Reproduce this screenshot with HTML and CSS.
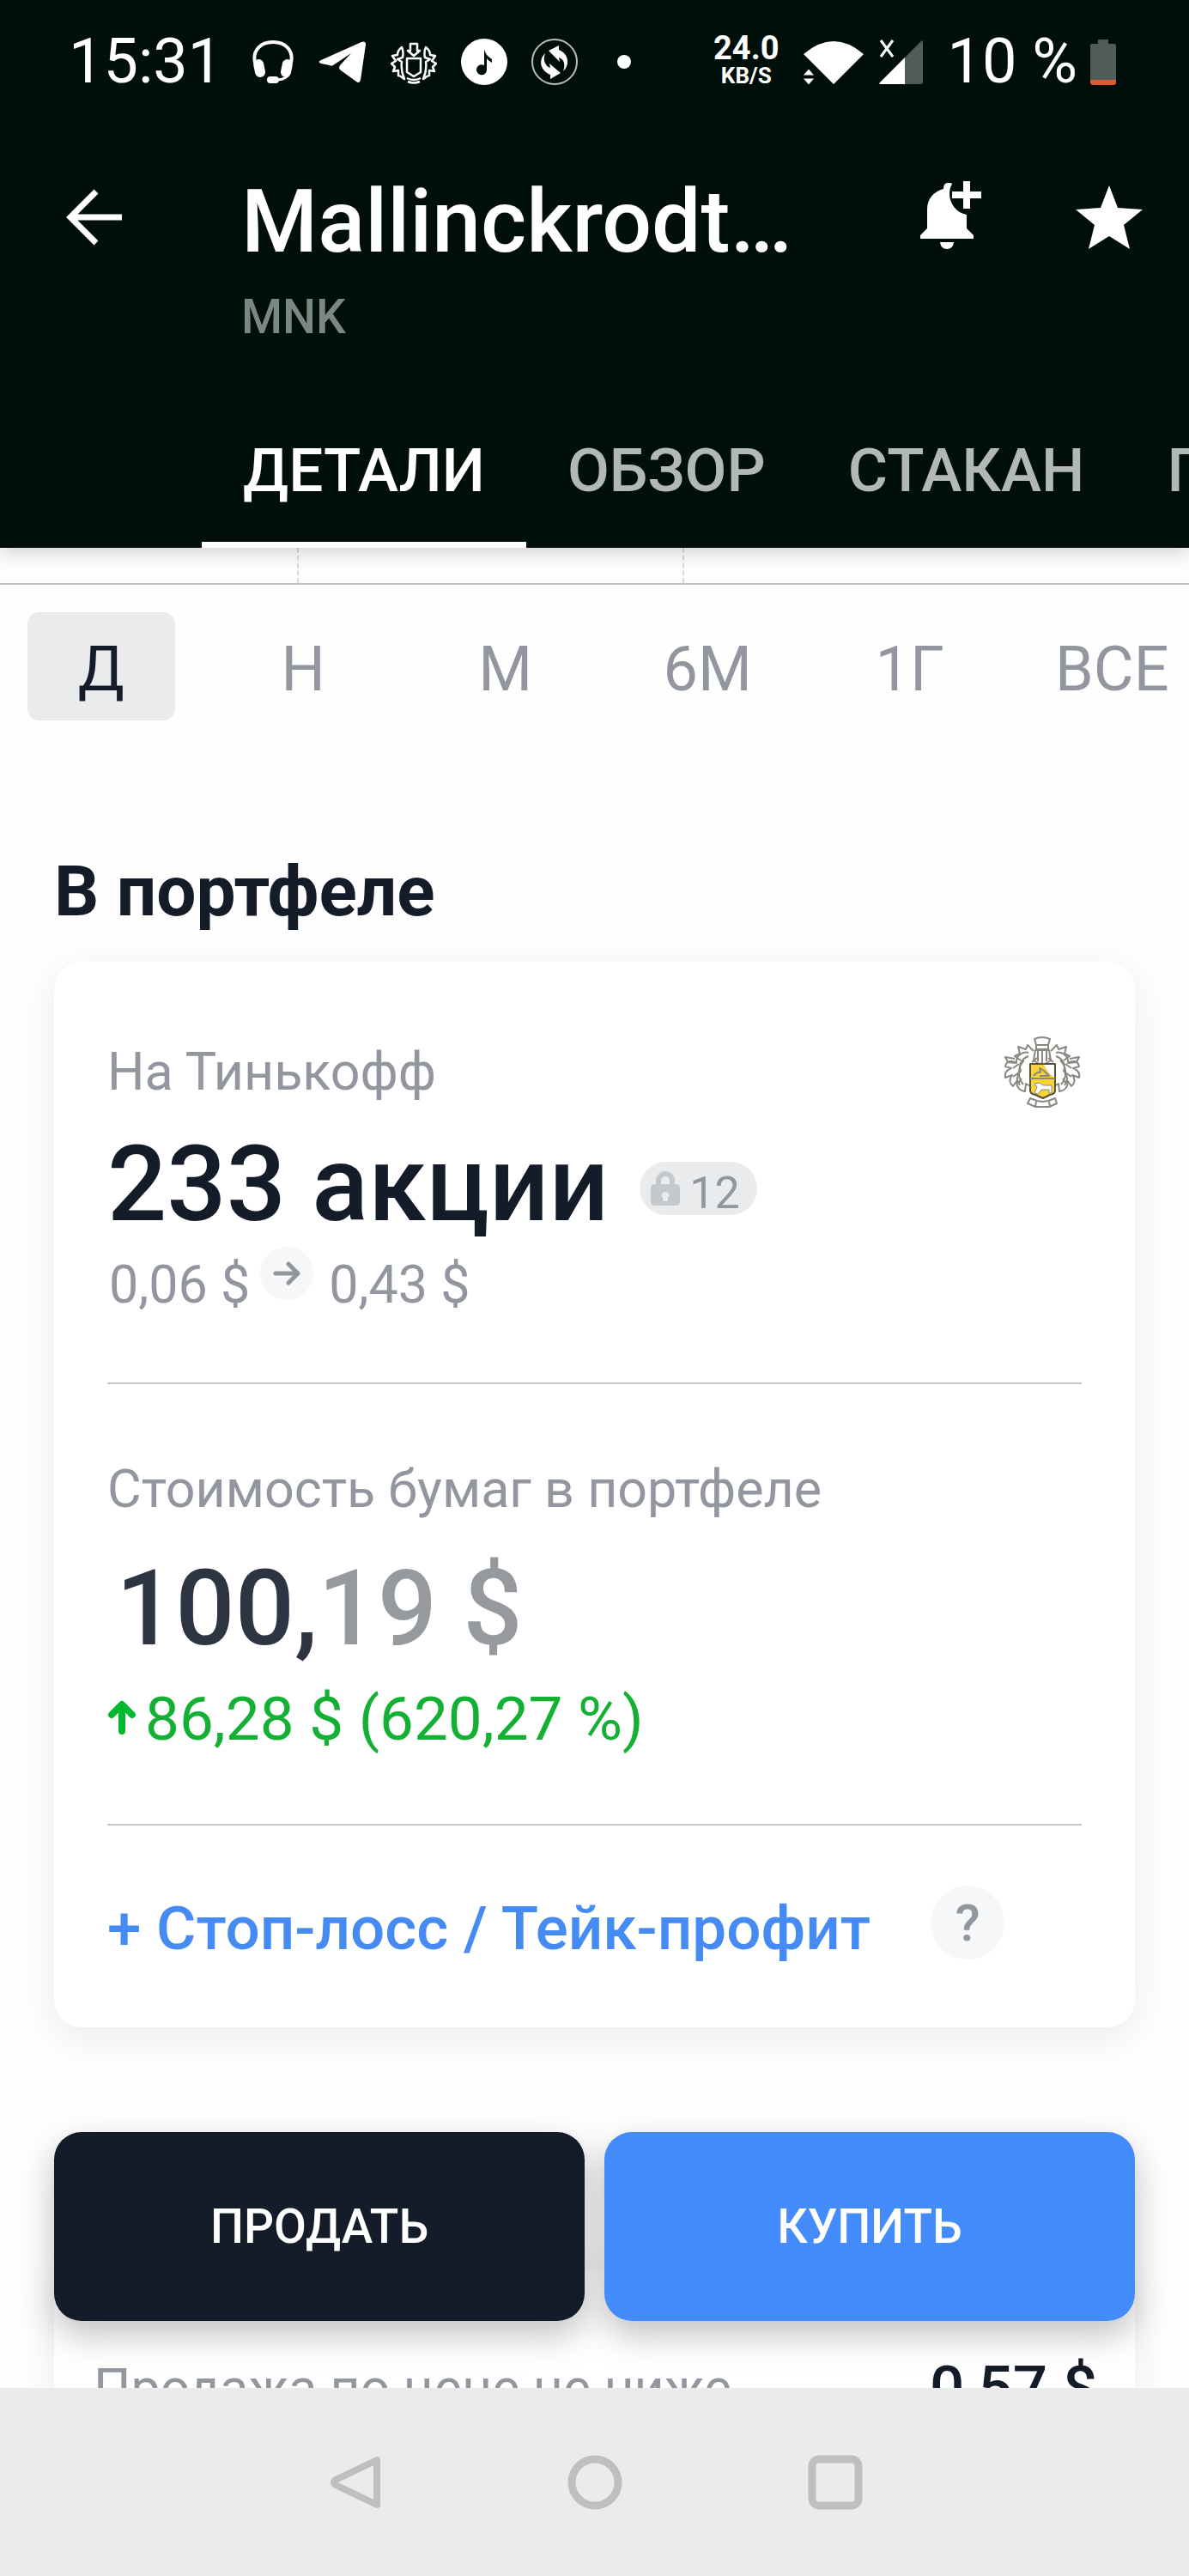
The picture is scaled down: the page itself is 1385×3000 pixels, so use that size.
FILE: index.html
```html
<!DOCTYPE html>
<html lang="ru">
<head>
    <meta charset="UTF-8">
    <meta name="viewport" content="width=device-width, initial-scale=1.0">
    <title>Mallinckrodt</title>
    <link rel="stylesheet" href="styles.css">
</head>
<body>
    <header class="header">
        <div class="status">
            <span class="status-text">15:31</span>
            <div class="status-icons">
                <svg width="50" height="54" viewBox="0 0 50 54">
                    <path d="M4 28C1 14 10 4 25 4s24 10 21 24" fill="none" stroke="#fff" stroke-width="4"/>
                    <rect x="3" y="24" width="12" height="21" rx="6" fill="#fff" transform="rotate(-12 9 34)"/>
                    <rect x="35" y="24" width="12" height="21" rx="6" fill="#fff" transform="rotate(12 41 34)"/>
                    <path d="M43 42q-3 5-12 6" fill="none" stroke="#fff" stroke-width="3"/>
                    <rect x="18" y="44" width="14" height="8" rx="4" fill="#fff"/>
                </svg>
                <svg width="56" height="54" viewBox="0 0 56 54">
                    <path d="M3 25L50 4q5-2 5 3l-6 41q-1 5-5 2L26 37q-4-3 0-7l12-13L17 31q-2 1-4 0L3 29q-5-2 0-4z" fill="#fff"/>
                </svg>
                <svg width="54" height="54" viewBox="0 0 54 54" fill="none" stroke="#fff" stroke-width="2.5" stroke-linejoin="round">
                    <path d="M23 6h8v8h3l-7 6-7-6h3zM19 23h16v16l-8 5-8-5z"/>
                    <path d="M13 10c-4 3-5 6-5 9l-6 1 4 6-5 3 4 4-2 5 6-1v6c3 0 5 3 7 4-3-7-4-13-3-20l-5-3 6-2c1-5 1-8-1-12z"/>
                    <path d="M41 10c4 3 5 6 5 9l6 1-4 6 5 3-4 4 2 5-6-1v6c-3 0-5 3-7 4 3-7 4-13 3-20l5-3-6-2c-1-5-1-8 1-12z"/>
                    <path d="M19 46q8 4 16 0M20 50q7 3 14 0"/>
                </svg>
                <svg width="54" height="54" viewBox="0 0 54 54">
                    <circle cx="27" cy="27" r="27" fill="#fff"/>
                    <path d="M27 12q1 7 9 12v4q-5-3-6-5v13a6 6 0 1 1-3-5z" fill="#000f0a"/>
                </svg>
                <svg width="54" height="54" viewBox="0 0 54 54">
                    <circle cx="27" cy="27" r="26" fill="none" stroke="#b9bfbd" stroke-width="2"/>
                    <path d="M20 14l12-6v5c12 5 13 18 5 25 3-8 1-14-5-16l1 5zM34 40l-12 7v-5c-12-5-14-17-6-25-3 8 0 15 6 17l-1-5z" fill="#fff"/>
                </svg>
                <span class="status-dot"></span>
            </div>
            <div class="speed"><b class="speed-value">24.0</b><b class="speed-unit">KB/S</b></div>
            <svg class="wifi" width="72" height="54" viewBox="0 0 72 54">
                <path d="M1 18Q36-12 71 18L36 53z" fill="#fff"/>
                <path d="M0 43l7-8 7 8zM0 46h14l-7 8z" fill="#fff" stroke="#000f0a" stroke-width="1"/>
            </svg>
            <svg class="signal" width="54" height="54" viewBox="0 0 54 54">
                <path d="M50 3q2-2 2 1v46q0 3-3 3H30V23z" fill="#4f5c57"/>
                <path d="M31 22v31H3q-3 0-1-2z" fill="#fff"/>
                <path d="M3 2l14 19M17 2L3 21" stroke="#fff" stroke-width="3"/>
            </svg>
            <span class="status-text">10 %</span>
            <svg class="battery" width="32" height="54" viewBox="0 0 32 54">
                <path d="M10 1h12v5h7q2 0 2 3v39H1V9q0-3 2-3h7z" fill="#4f5c57"/>
                <path d="M1 48h30v3q0 3-3 3H4q-3 0-3-3z" fill="#de5a35"/>
            </svg>
        </div>

        <div class="app-bar">
            <button class="icon-button back" aria-label="Назад">
                <svg width="66" height="66" viewBox="0 0 66 66" fill="none" stroke="#fff" stroke-width="7">
                    <path d="M65 33H6M35 3L5 33l30 30"/>
                </svg>
            </button>
            <div class="titles">
                <h1 class="title">Mallinckrodt…</h1>
                <p class="ticker">MNK</p>
            </div>
            <button class="icon-button bell" aria-label="Уведомления">
                <svg width="72" height="84" viewBox="0 0 72 84" fill="#fff">
                    <path d="M28 9q0-7 5-7t5 1c-8 15 1 33 17 36v16l8 8v4H1v-4l8-8V33C9 20 17 12 28 9z"/>
                    <path d="M24 71h16q-1 8-8 8t-8-8zM51 0h8v12h13v8H59v12h-8V20H38v-8h13z"/>
                </svg>
            </button>
            <button class="icon-button" aria-label="В избранное">
                <svg width="78" height="74" viewBox="0 0 78 74">
                    <path d="M39 0l10 26 29 2-22 18 7 28-24-15-24 15 7-28L0 28l29-2z" fill="#fff"/>
                </svg>
            </button>
        </div>

        <nav class="tabs">
            <a class="tab active" href="#">ДЕТАЛИ</a>
            <a class="tab" href="#">ОБЗОР</a>
            <a class="tab" href="#">СТАКАН</a>
            <a class="tab" href="#">ПУЛЬС</a>
        </nav>
    </header>

    <main class="content">
        <div class="chart">
            <span class="grid-line"></span>
            <span class="grid-line"></span>
        </div>

        <div class="periods">
            <button class="period selected">Д</button>
            <button class="period">Н</button>
            <button class="period">М</button>
            <button class="period">6М</button>
            <button class="period">1Г</button>
            <button class="period">ВСЕ</button>
        </div>

        <h2 class="section-title">В портфеле</h2>

        <section class="card">
            <div class="account">
                <span class="label">На Тинькофф</span>
                <svg width="92" height="84" viewBox="0 0 92 84" fill="none" stroke="#8b8883" stroke-width="2" stroke-linejoin="round">
                    <path d="M37 4q9-4 18 0l-2 7H39zM39 11h14v5H39zM38 17h16l2 12-10 6-10-6zM41 17v13M46 17v16M51 17v13"/>
                    <path d="M36 18l-7-7-2 5-9-3 2 8-6 3 7 5M30 20c-8-2-15 5-14 12-6-4-12-2-13 4l7 2c-5 2-8 6-7 11l8-3c-4 5-3 10 1 13l5-7c-2 7 2 12 9 13l1-9 7 4"/>
                    <path d="M30 24c-8 3-12 10-9 17-5 6-5 12-1 17M14 27L3 25l3 6 9 1M25 29c-8 7-8 20-1 28M12 38l7-5M12 48l7-5M18 56l4-6"/>
                    <path d="M56 18l7-7 2 5 9-3-2 8 6 3-7 5M62 20c8-2 15 5 14 12 6-4 12-2 13 4l-7 2c5 2 8 6 7 11l-8-3c4 5 3 10-1 13l-5-7c2 7-2 12-9 13l-1-9-7 4"/>
                    <path d="M62 24c8 3 12 10 9 17 5 6 5 12 1 17M78 27l11-2-3 6-9 1M67 29c8 7 8 20 1 28M80 38l-7-5M80 48l-7-5M74 56l-4-6"/>
                    <path d="M32 33h29v31q0 4-6 5l-8 4-9-4q-6-1-6-5z" fill="#f8d437" stroke="#57513a"/>
                    <path d="M48 34h12v15q-7-5-12-15z" fill="#fff" stroke="none"/>
                    <path d="M32 50h29M36 47q4-5 8-4l-1-5 5 3 6 6H43" fill="none"/>
                    <path d="M37 67l3-7-3-4 6-1 4 3h10v9h-3v-4h-9l-4 5z" fill="#fff" stroke-width="1"/>
                    <path d="M34 31l6-5M59 31l-6-5M32 73l8 3 6 1 7-1 8-3 2 6-9 4H38l-9-4zM39 77l-1 6M54 77l1 6"/>
                </svg>
            </div>
            <div class="amount-row">
                <strong class="amount">233 акции</strong>
                <span class="locked">
                    <svg width="36" height="42" viewBox="0 0 36 42">
                        <path d="M10 18V12a8 8 0 0 1 16 0v6" fill="none" stroke="#c6c9cc" stroke-width="6"/>
                        <path d="M6 16h24q5 0 5 5v15q0 5-5 5H6q-5 0-5-5V21q0-5 5-5z" fill="#c6c9cc"/>
                        <path d="M18 25a4 4 0 0 1 3 7v4h-6v-4a4 4 0 0 1 3-7z" fill="#e9ebec"/>
                    </svg>
                    <span class="locked-count">12</span>
                </span>
            </div>
            <div class="prices">
                <span class="label">0,06 $</span>
                <span class="price-arrow">
                    <svg width="32" height="28" viewBox="0 0 32 28" fill="none" stroke="#92969f" stroke-width="5" stroke-linecap="round" stroke-linejoin="round">
                        <path d="M3 14h25M18 3l11 11-11 11"/>
                    </svg>
                </span>
                <span class="label">0,43 $</span>
            </div>
            <hr class="divider">
            <p class="label value-label">Стоимость бумаг в портфеле</p>
            <p class="value">100,<span class="value-cents">19 $</span></p>
            <p class="profit">
                <svg width="34" height="46" viewBox="0 0 34 46" fill="none" stroke="#00b92d" stroke-width="8" stroke-linecap="round" stroke-linejoin="round">
                    <path d="M17 37V7M5 18L17 6l12 12"/>
                </svg>
                86,28 $ (620,27 %)
            </p>
            <hr class="divider">
            <div class="stop-row">
                <a class="stop-link" href="#">+ Стоп-лосс / Тейк-профит</a>
                <button class="help">?</button>
            </div>
        </section>

        <section class="card order">
            <span class="label">Продажа по цене не ниже</span>
            <strong class="order-price">0,57 $</strong>
        </section>

        <div class="actions">
            <button class="action sell">ПРОДАТЬ</button>
            <button class="action buy">КУПИТЬ</button>
        </div>
    </main>

    <footer class="system-nav">
        <button class="icon-button" aria-label="Назад">
            <svg width="64" height="64" viewBox="0 0 64 64" fill="none" stroke="#bfbfbf" stroke-width="8" stroke-linejoin="round">
                <path d="M58 6v52L10 35q-4-3 0-6z"/>
            </svg>
        </button>
        <button class="icon-button" aria-label="Домой">
            <svg width="64" height="64" viewBox="0 0 64 64" fill="none" stroke="#bfbfbf" stroke-width="9">
                <circle cx="32" cy="32" r="27"/>
            </svg>
        </button>
        <button class="icon-button" aria-label="Недавние">
            <svg width="64" height="64" viewBox="0 0 64 64" fill="none" stroke="#bfbfbf" stroke-width="9">
                <rect x="5" y="5" width="54" height="54" rx="8"/>
            </svg>
        </button>
    </footer>
</body>
</html>
```

FILE: styles.css
```css
* {
    box-sizing: border-box;
}

body {
    font-family: Roboto, "Liberation Sans", sans-serif;
    display: flex;
    flex-direction: column;
    height: 100vh;
    margin: 0;
    background: #fefefe;
    color: #141c2a;
    overflow: hidden;
}

h1, h2, p {
    margin: 0;
}

button {
    font-family: inherit;
    padding: 0;
    border: none;
    background: none;
    cursor: pointer;
}

svg {
    display: block;
    flex: none;
}

a {
    text-decoration: none;
}

/* header */
.header {
    position: relative;
    z-index: 1;
    flex: none;
    background: #000f0a;
    color: #fff;
    box-shadow: 0 4px 24px rgba(0,0,0,0.2);
}

.status {
    display: flex;
    align-items: center;
    height: 144px;
    padding: 0 84px 0 80px;
}

.status-text {
    font-size: 72px;
    line-height: 84px;
    white-space: nowrap;
}

.status-icons {
    display: flex;
    align-items: center;
    gap: 28px;
    margin-left: 34px;
}

.status-dot {
    width: 16px;
    height: 16px;
    margin-left: 18px;
    border-radius: 50%;
    background: #fff;
}

.speed {
    display: flex;
    flex-direction: column;
    align-items: center;
    margin-left: auto;
}

.speed-value {
    font-size: 38px;
    line-height: 32px;
}

.speed-unit {
    font-size: 26px;
    line-height: 32px;
}

.wifi {
    margin-left: 28px;
}

.signal {
    margin: 0 26px 0 16px;
}

.battery {
    margin-left: 14px;
}

.app-bar {
    display: flex;
    align-items: flex-start;
    padding: 54px 54px 0 77px;
}

.icon-button {
    display: flex;
    align-items: center;
    justify-content: center;
}

.app-bar .icon-button {
    height: 110px;
}

.titles {
    flex: 1;
    margin-left: 138px;
}

.title {
    font-size: 102px;
    font-weight: 500;
    line-height: 120px;
}

.ticker {
    margin-top: 16px;
    font-size: 55px;
    font-weight: 500;
    line-height: 70px;
    color: #7b8783;
}

.bell {
    margin-right: 110px;
}

.tabs {
    display: flex;
    margin-top: 64px;
    padding-left: 235px;
    overflow: hidden;
}

.tab {
    padding: 40px 48px 43px;
    border-bottom: 7px solid transparent;
    font-size: 71px;
    font-weight: 500;
    line-height: 80px;
    color: #b2b8b6;
}

.tab.active {
    border-color: #fff;
    color: #fff;
}

/* content */
.content {
    position: relative;
    flex: 1;
    min-height: 0;
    overflow: hidden;
}

.chart {
    display: flex;
    gap: 43%;
    height: 43px;
    padding-left: 25%;
    border-bottom: 2px solid #c2c2c2;
}

.grid-line {
    border-left: 2px dashed #dcdcdc;
}

.periods {
    display: flex;
    gap: 64px;
    padding: 32px 4px 0 32px;
}

.period {
    flex: 1 1 0;
    min-width: 0;
    height: 126px;
    padding-top: 6px;
    border-radius: 14px;
    font-size: 72px;
    color: #92969f;
}

.period.selected {
    background: #e9ebed;
    color: #141c2a;
}

.section-title {
    margin: 151px 63px 34px;
    font-size: 82px;
    font-weight: 700;
    line-height: 96px;
}

.card {
    margin: 0 63px;
    padding: 86px 62px 79px;
    border-radius: 32px;
    background: #fff;
    box-shadow: 0 12px 48px rgba(0,0,0,0.08);
}

.label {
    font-size: 61px;
    line-height: 72px;
    color: #92969f;
    white-space: nowrap;
}

.account {
    display: flex;
    align-items: center;
    justify-content: space-between;
}

.amount-row {
    display: flex;
    align-items: center;
    gap: 36px;
    margin-top: 18px;
}

.amount {
    font-size: 122px;
    font-weight: 500;
    line-height: 144px;
}

.locked {
    display: flex;
    align-items: center;
    gap: 10px;
    height: 62px;
    margin-top: 8px;
    padding: 0 20px 0 12px;
    border-radius: 31px;
    background: #e9ebec;
}

.locked-count {
    align-self: flex-end;
    font-size: 52px;
    line-height: 50px;
    color: #92969f;
}

.prices {
    display: flex;
    align-items: flex-end;
    height: 80px;
    padding-left: 2px;
}

.price-arrow {
    display: flex;
    align-self: flex-start;
    align-items: center;
    justify-content: center;
    width: 62px;
    height: 62px;
    margin: 0 18px 0 12px;
    border-radius: 50%;
    background: #f6f7f8;
}

.divider {
    height: 2px;
    margin: 78px 0 0;
    border: none;
    background: #c6c7c9;
}

.value-label {
    margin-top: 86px;
}

.value {
    margin-top: 32px;
    padding-left: 10px;
    font-size: 122px;
    font-weight: 500;
    line-height: 144px;
    color: #2e3542;
}

.value-cents {
    color: #969a9f;
}

.profit {
    display: flex;
    align-items: center;
    gap: 10px;
    margin-top: 12px;
    font-size: 71px;
    line-height: 88px;
    color: #14b033;
}

.stop-row {
    display: flex;
    align-items: flex-end;
    gap: 70px;
    margin-top: 70px;
}

.stop-link {
    font-size: 71px;
    font-weight: 500;
    line-height: 72px;
    color: #458bf3;
}

.help {
    width: 86px;
    height: 86px;
    border-radius: 50%;
    background: #f6f7f8;
    font-size: 60px;
    font-weight: 500;
    color: #92969f;
}

.order {
    display: flex;
    align-items: center;
    justify-content: space-between;
    margin-top: 282px;
    padding: 98px 44px 98px 46px;
}

.order-price {
    font-size: 71px;
    font-weight: 500;
    line-height: 80px;
}

/* buttons over the list */
.actions {
    position: absolute;
    right: 63px;
    bottom: 78px;
    left: 63px;
    display: flex;
    gap: 23px;
}

.action {
    flex: 1;
    height: 220px;
    border-radius: 32px;
    font-size: 55px;
    font-weight: 500;
    color: #fff;
    box-shadow: 0 16px 40px rgba(0,0,0,0.25);
}

.sell {
    background: #141c2a;
}

.buy {
    background: #448bfc;
}

/* system buttons */
.system-nav {
    display: flex;
    flex: none;
    align-items: center;
    justify-content: center;
    gap: 216px;
    height: 219px;
    background: #ebebeb;
}
```
